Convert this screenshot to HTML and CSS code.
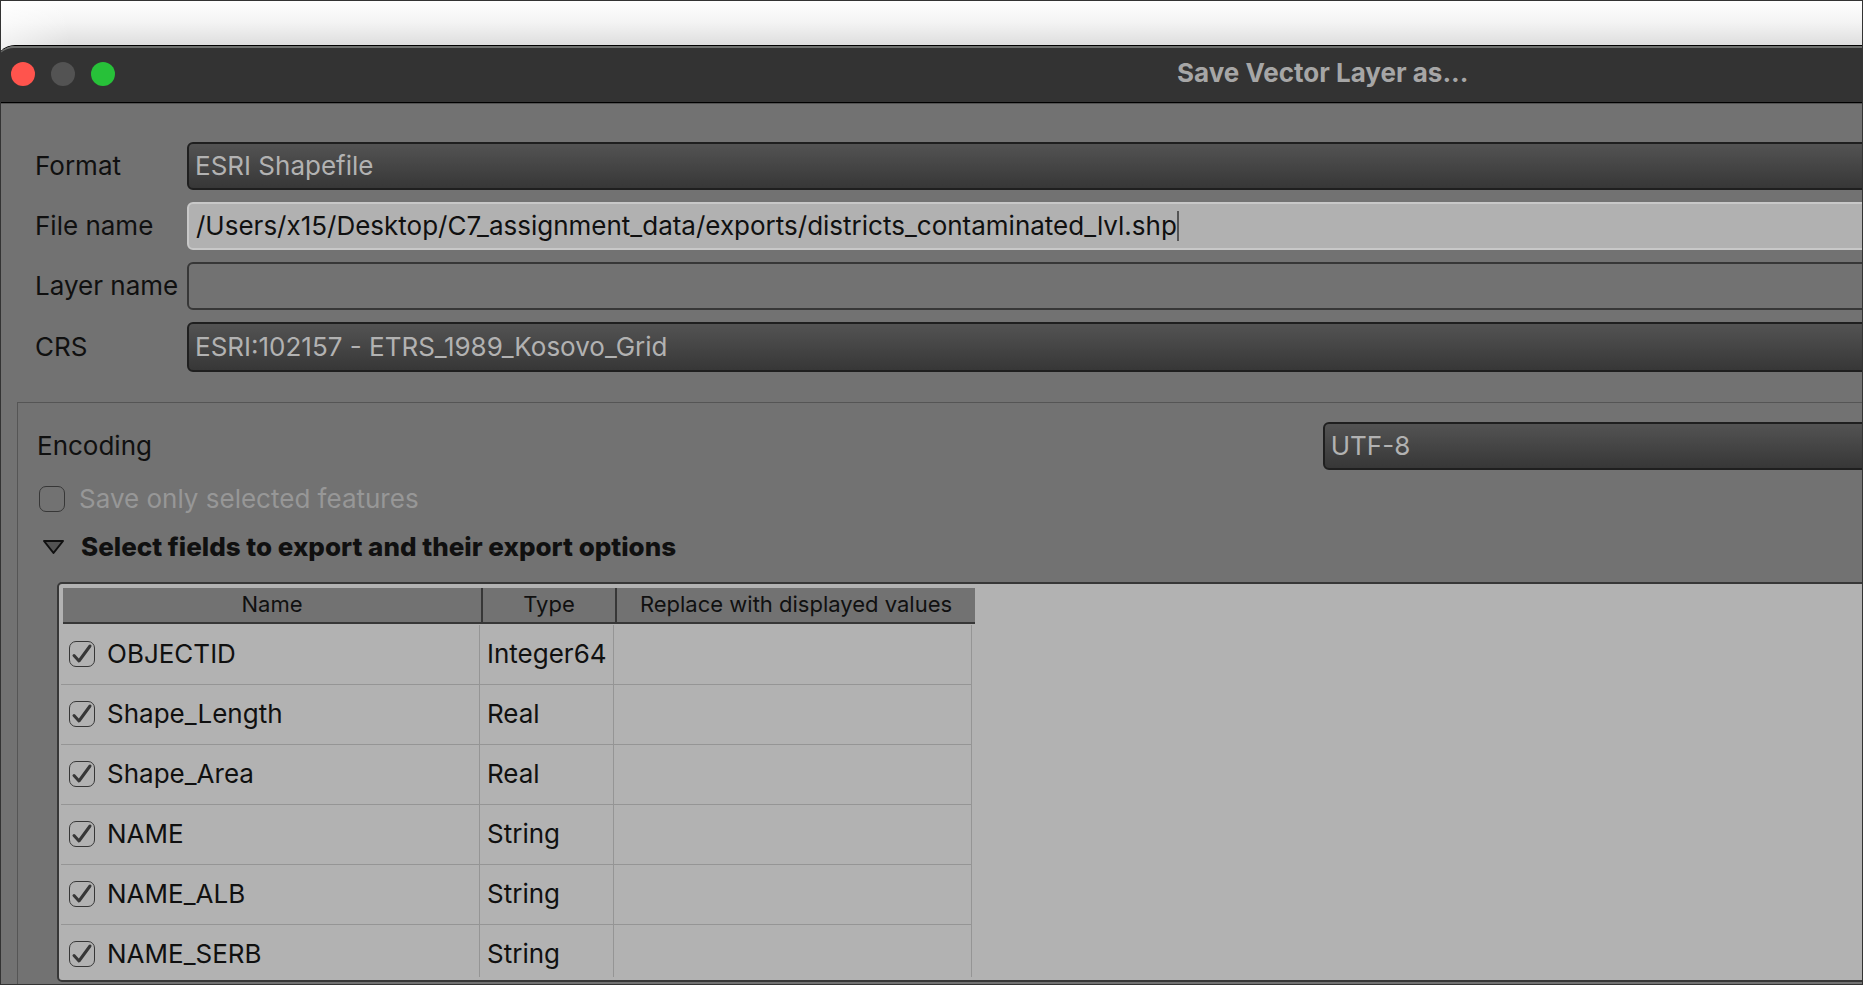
FILE: index.html
```html
<!DOCTYPE html>
<html lang="en">
<head>
<meta charset="utf-8">
<title>Save Vector Layer as...</title>
<link rel="stylesheet" href="styles.css">
</head>
<body>
<main class="dialog">
  <header class="titlebar">
    <div class="lights">
      <button class="light light-close" aria-label="Close"></button>
      <button class="light light-min" aria-label="Minimize" disabled></button>
      <button class="light light-zoom" aria-label="Zoom"></button>
    </div>
    <h1 class="title">Save Vector Layer as...</h1>
  </header>
  <form class="content">
    <div class="fields">
      <label for="format">Format</label>
      <select id="format" class="combo"><option>ESRI Shapefile</option></select>
      <label for="file">File name</label>
      <div class="box box-active">
        <input id="file" class="file-input" type="text" spellcheck="false" value="/Users/x15/Desktop/C7_assignment_data/exports/districts_contaminated_lvl.shp">
        <span class="caret"></span>
      </div>
      <label for="layer">Layer name</label>
      <input id="layer" class="box" type="text" disabled>
      <label for="crs">CRS</label>
      <select id="crs" class="combo combo-tall"><option>ESRI:102157 - ETRS_1989_Kosovo_Grid</option></select>
    </div>
    <section class="group">
      <div class="encoding">
        <label for="encoding">Encoding</label>
        <select id="encoding" class="combo"><option>UTF-8</option></select>
      </div>
      <label class="selected-only"><input class="check" type="checkbox" disabled>Save only selected features</label>
      <button class="disclosure" type="button" aria-expanded="true">
        <svg class="triangle" viewBox="0 0 24 16" aria-hidden="true"><path d="M3 2H22L12.500 14Z"/></svg>
        Select fields to export and their export options
      </button>
      <div class="list">
        <table class="table">
          <thead class="thead">
            <tr class="tr"><th>Name</th><th>Type</th><th>Replace with displayed values</th></tr>
          </thead>
          <tbody class="tbody">
            <tr class="tr"><td><label class="field"><input class="check" type="checkbox" checked>OBJECTID</label></td><td>Integer64</td><td></td></tr>
            <tr class="tr"><td><label class="field"><input class="check" type="checkbox" checked>Shape_Length</label></td><td>Real</td><td></td></tr>
            <tr class="tr"><td><label class="field"><input class="check" type="checkbox" checked>Shape_Area</label></td><td>Real</td><td></td></tr>
            <tr class="tr"><td><label class="field"><input class="check" type="checkbox" checked>NAME</label></td><td>String</td><td></td></tr>
            <tr class="tr"><td><label class="field"><input class="check" type="checkbox" checked>NAME_ALB</label></td><td>String</td><td></td></tr>
            <tr class="tr"><td><label class="field"><input class="check" type="checkbox" checked>NAME_SERB</label></td><td>String</td><td></td></tr>
          </tbody>
        </table>
      </div>
    </section>
  </form>
</main>
</body>
</html>
```
FILE: styles.css
```css
* { box-sizing: border-box; }

body {
  margin: 0;
  height: 100vh;
  display: flex;
  flex-direction: column;
  overflow: hidden;
  border: 1px solid #333;
  padding-top: 44px;
  background:
    linear-gradient(90deg, rgba(255, 255, 255, .6), rgba(255, 255, 255, 0) 70px) top / 100% 60px no-repeat,
    linear-gradient(#fff, #f4f4f4 22px, #dedede 45px) top / 100% 60px no-repeat,
    #727272;
  font: 26px/32px Inter, "Liberation Sans", sans-serif;
  color: #101010;
}

input, select, button { font: inherit; color: inherit; margin: 0; }

/* The dialog is wider than the viewport and runs off its right edge. */
.dialog {
  flex: 1;
  min-height: 0;
  width: calc(142vw + 10px);
  margin-left: -6px;
  display: flex;
  flex-direction: column;
  overflow: hidden;
  border-top: 1px solid #000;
  border-radius: 20px 20px 0 0;
  background: #727272;
}

.titlebar {
  display: grid;
  grid-template-columns: 1fr auto 1fr;
  align-items: center;
  height: 57px;
  padding: 0 16px 2px;
  border-top: 2px solid #6f716f;
  border-bottom: 1px solid #000;
  border-radius: 19px 19px 0 0;
  background: #333;
}
.lights { display: flex; gap: 16px; }
.light { width: 24px; height: 24px; padding: 0; border: 0; border-radius: 50%; }
.light-close { background: #ff544d; }
.light-min { background: #535353; }
.light-zoom { background: #27c139; }
.title { margin: 0; padding-bottom: 2px; font-size: 26px; line-height: 32px; font-weight: 700; color: #a6a6a6; }

.content {
  flex: 1;
  min-height: 0;
  display: flex;
  flex-direction: column;
  padding: 38px 22px 0;
  border-top: 1px solid #535353;
}
.fields {
  display: grid;
  grid-template-columns: 152px 1fr;
  row-gap: 12px;
  align-items: center;
  padding-left: 18px;
}

.combo {
  appearance: none;
  width: 100%;
  height: 48px;
  padding: 0 6px;
  border: 2px solid #1f1f1f;
  border-radius: 6px;
  background: linear-gradient(#535353, #373737);
  color: #b2b2b2;
}
.combo-tall { height: 50px; }

.box {
  display: flex;
  align-items: center;
  width: 100%;
  height: 48px;
  padding: 0 7px;
  border: 2px solid #373737;
  border-radius: 6px;
  background: #727272;
}
.box-active { border-color: #c8c8c8; background: #b1b1b1; }
.file-input {
  field-sizing: content;
  padding: 0;
  border: 0;
  outline: 0;
  background: none;
}
.caret { width: 2px; height: 30px; background: #555; }

.group {
  flex: 1;
  min-height: 0;
  display: flex;
  flex-direction: column;
  align-items: flex-start;
  margin-top: 30px;
  padding: 19px 19px 2px;
  border: 1px solid #555;
  border-bottom: 0;
}
.encoding {
  display: grid;
  grid-template-columns: 1fr 1fr;
  align-items: center;
  align-self: stretch;
}

.check {
  appearance: none;
  width: 26px;
  height: 26px;
  border: 1px solid #373737;
  border-radius: 7px;
}
.check:checked {
  background: url("data:image/svg+xml,%3Csvg xmlns='http://www.w3.org/2000/svg' viewBox='0 0 24 24'%3E%3Cpath d='M4 13.500L9 19L20 4' fill='none' stroke='%23373737' stroke-width='3' stroke-linecap='round' stroke-linejoin='round'/%3E%3C/svg%3E") center / 24px 24px no-repeat;
}

.selected-only {
  display: flex;
  align-items: center;
  gap: 14px;
  margin: 13px 0 0 2px;
  color: #979797;
}
.disclosure {
  display: flex;
  align-items: center;
  gap: 16px;
  margin: 16px 0 0 4px;
  padding: 0;
  border: 0;
  background: none;
  font-weight: 800;
}
.triangle { width: 24px; height: 16px; fill: #535353; stroke: #101010; stroke-width: 2; stroke-linejoin: round; }

.list {
  flex: 1;
  min-height: 0;
  align-self: stretch;
  display: flex;
  margin: 19px 0 0 20px;
  padding: 4px 2px 3px;
  border: 2px solid #373737;
  border-radius: 5px;
  background: #b2b2b2;
}
.table { display: block; overflow: hidden; }
.thead, .tbody { display: block; }
.tr { display: grid; grid-template-columns: 419px 134px 358px; }
.thead { margin-left: 2px; }
.thead .tr { grid-template-columns: 420px 134px 358px; }
.thead th {
  height: 36px;
  padding: 0 0 2px;
  border-right: 2px solid #373737;
  border-bottom: 2px solid #373737;
  background: #727272;
  font-size: 22px;
  line-height: 32px;
  font-weight: 400;
}
.thead th:last-child { border-right: 0; }
.tbody { margin-top: 1px; }
.tbody td {
  display: flex;
  align-items: center;
  height: 60px;
  padding: 0 7px 2px;
  border-right: 1px solid #959595;
  border-bottom: 1px solid #959595;
}
.field { display: flex; align-items: center; gap: 12px; padding-left: 1px; }
```
